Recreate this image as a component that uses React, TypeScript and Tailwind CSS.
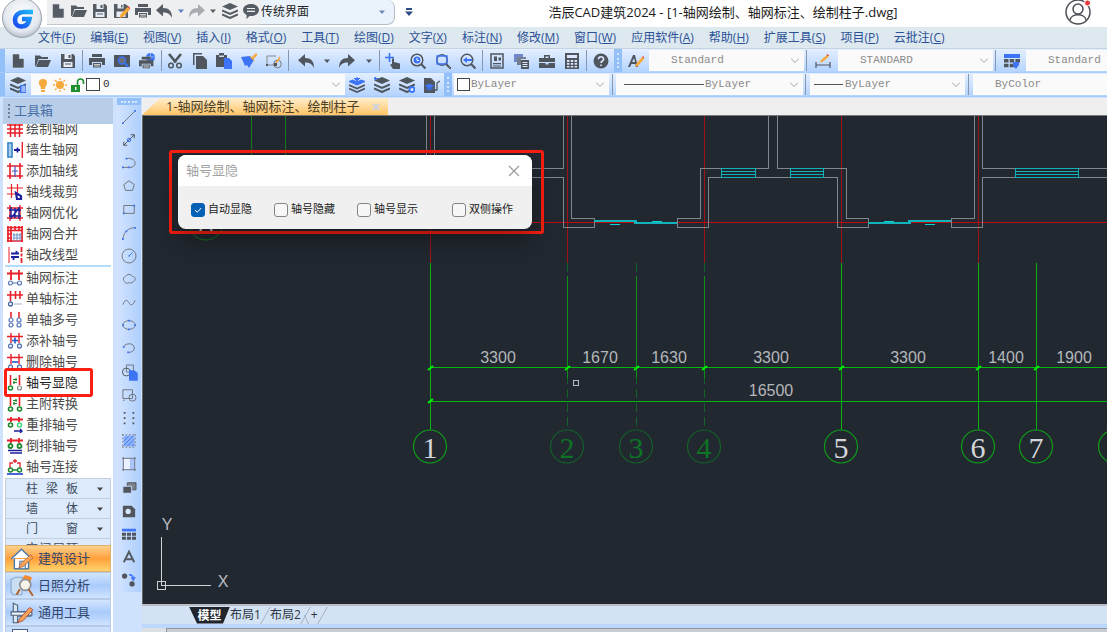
import { useState } from 'react';
import type { ReactNode } from 'react';

const BLUE = '#3d74f5';
const ORANGE = '#f5a83c';

function Svg({ children, className = 'h-4 w-4', box = 16 }: { children: ReactNode; className?: string; box?: number }) {
    return (
        <svg viewBox={`0 0 ${box} ${box}`} className={`shrink-0 ${className}`} fill="currentColor" stroke="none" aria-hidden="true">
            {children}
        </svg>
    );
}

/* ---------- solid toolbar icons ---------- */

const layerStack = (
    <>
        <path d="M8 0 16 3.500 8 7 0 3.500Z" />
        <path d="M0 7.500l8 3.500 8-3.500M0 11.500 8 15l8-3.500" fill="none" stroke="currentColor" strokeWidth="2" />
    </>
);

const printer = (
    <>
        <path d="M3 1h10v3H3zM0 5h16v7h-3V9H3v3H0z" />
        <path d="M4 10h8v4.500H4z" />
        <path d="M5 11.500h6M5 13h6" stroke="#fff" strokeWidth=".7" />
    </>
);

const icons: Record<string, ReactNode> = {
    file: <path d="M2.500 1H9.500L14 5.500V15H2.500zM9.500 1v4.500H14" stroke="#dfe6f0" strokeWidth=".6" />,
    open: <path d="M0 2.500h5L6.500 4H13v2H3.500L1.500 12 0 13.500zM4 7h12l-3 7H1z" />,
    save: (
        <>
            <path d="M1 1h12l2 2v12H1z" />
            <path d="M4.500 1h7v5h-7zM3.500 9h9v5h-9z" fill="#e9eef6" />
            <path d="M8.500 2h2v3h-2zM5 10.500h6v1H5z" />
        </>
    ),
    saveAs: (
        <>
            <path d="M0 1h11l3 2v12H0z" />
            <path d="M3.500 1h6v4.500h-6zM2.500 8.500h9V14h-9z" fill="#e9eef6" />
            <path d="M7 2h1.500v2.500H7z" />
            <path d="M5.500 15l1-3.500 7-7.500 2.500 2.500-7 7.500z" fill={ORANGE} />
            <path d="M13.500 4l1-1L17 5.500l-1 1z" fill="#e04b3a" />
        </>
    ),
    print: printer,
    undo: <path d="M7 1v4c6 0 9 3 9 10-2-4-4-5.500-9-5.500V13.500L0 7.200z" />,
    redo: <path d="M9 1v4c-6 0-9 3-9 10 2-4 4-5.500 9-5.500V13.500L16 7.200z" />,
    layers: layerStack,
    chat: (
        <>
            <path d="M8 1c4.500 0 8 2.600 8 6s-3.500 6-8 6l-1.500-.1L3.500 16l.1-4.100C1.400 10.800 0 9 0 7c0-3.400 3.500-6 8-6Z" />
            <path d="M4 5.500h8M4 8.300h8" stroke="#eee" strokeWidth="1.200" />
        </>
    ),
    preview: (
        <>
            <path d="M0 2h16v12H0z" />
            <circle cx="8" cy="7.500" r="3.500" fill="#6b7079" stroke={BLUE} strokeWidth="1.500" />
            <path d="M10.500 10l4 4" stroke={BLUE} strokeWidth="2" />
        </>
    ),
    publish: (
        <>
            <circle cx="11.500" cy="4.500" r="4.500" fill={BLUE} />
            <path d="M7.500 4h8M11.500 0v6" stroke="#a9c4ff" strokeWidth=".8" />
            <g transform="translate(0 3) scale(.9 .85)">{printer}</g>
        </>
    ),
    cut: (
        <>
            <path d="M2 1l7 8.500M14 1 7 9.500" stroke="currentColor" strokeWidth="2.600" />
            <circle cx="4" cy="12.500" r="2.300" fill="none" stroke="currentColor" strokeWidth="1.500" />
            <circle cx="12" cy="12.500" r="2.300" fill="none" stroke="currentColor" strokeWidth="1.500" />
        </>
    ),
    copy: <path d="M1 0h9v1.500H2.500V12H1zM4 3h7l4 4v9H4z" />,
    paste: (
        <>
            <path d="M0 2h3V0h5v2h3v12H0z" />
            <path d="M3 2.500h5v1.500H3z" fill="#cfdcf0" />
            <path d="M8 5h5l4 4v7H8z" fill={BLUE} />
        </>
    ),
    brush: (
        <>
            <path d="M0 4l9-1 4 4-5 8-2-3-2 1z" fill={BLUE} />
            <path d="M8 3l3 1 4-4 1.500 2-4 4L14 9" fill={ORANGE} />
        </>
    ),
    shape: (
        <>
            <path d="M1 12V3h9M1 12h7" fill="none" stroke="#888" strokeWidth="1" />
            <circle cx="11.500" cy="11" r="3.800" fill="none" stroke="#777" />
            <path d="M9 12l5-8" stroke={ORANGE} strokeWidth="1.500" />
            <path d="M0 11h2v2H0zM8 10h3v3H8z" />
        </>
    ),
    pan: (
        <>
            <path d="M4.500 0v9M0 4.500h9" stroke={BLUE} strokeWidth="1.600" />
            <path d="M7 5.500h2V9l6 1.500V16H8l-3-4.500 2-.5z" />
        </>
    ),
    zoomTime: (
        <>
            <circle cx="7" cy="7" r="5.800" fill="#dbe8ff" stroke="currentColor" strokeWidth="1.500" />
            <circle cx="7" cy="7" r="3.500" fill={BLUE} />
            <path d="M7 5v2.500h2" fill="none" stroke="#fff" />
            <path d="M11 11l4.500 4.500" stroke="currentColor" strokeWidth="2.200" />
        </>
    ),
    zoomWindow: (
        <>
            <circle cx="7" cy="7" r="5.300" fill="none" stroke="currentColor" strokeWidth="1.500" />
            <path d="M2 3h10v8H2z" fill="none" stroke={BLUE} strokeWidth="1.300" />
            <path d="M11 11l3.500 3.500M14 16h2v-2" stroke="currentColor" strokeWidth="2" />
        </>
    ),
    zoomBack: (
        <>
            <circle cx="7" cy="7" r="5.800" fill="none" stroke="currentColor" strokeWidth="1.400" />
            <path d="M3 7l4-3v2h5v2H7v2z" fill={BLUE} />
            <path d="M11 11l4.500 4.500" stroke="currentColor" strokeWidth="2.200" />
        </>
    ),
    props: (
        <>
            <path d="M2 1h12v14H2z" fill="none" stroke="currentColor" strokeWidth="1.500" />
            <path d="M5 3.500h3V8H5zM9.500 4.500H12v3H9.500zM4 10h8v1.200H4zM4 12.500h8v1H4z" />
        </>
    ),
    design: (
        <>
            <path d="M0 1h9v3H3v5H0z" fill="#6e87c9" />
            <path d="M3 4h9v2H7v6H3z" opacity=".7" />
            <path d="M7 7h8v9H7z" />
            <path d="M8.500 9.500h5M8.500 11.500h5M8.500 13.500h5" stroke="#dbe8ff" />
        </>
    ),
    toolbox: (
        <>
            <path d="M5 2h6v3h5v4H0V5h5zM6.500 3.500V5h3V3.500z" fillRule="evenodd" />
            <path d="M0 10h6.500v1.500h3V10H16v5H0z" />
        </>
    ),
    calc: (
        <>
            <path d="M1 0h14v16H1z" />
            <path d="M3 2h10v3H3zM3 7h2.400v2H3zM6.800 7h2.400v2H6.800zM10.600 7H13v2h-2.400zM3 10h2.400v1.800H3zM6.800 10h2.400v1.800H6.800zM10.600 10H13v1.800h-2.400zM3 13h2.400v1.500H3zM6.800 13h2.400v1.500H6.800zM10.600 13H13v1.500h-2.400z" fill="#dbe8ff" />
        </>
    ),
    help: (
        <>
            <circle cx="8" cy="8" r="7.500" />
            <path d="M5.500 6.300C5.500 3 10.600 3 10.600 6.200 10.600 8 8 8 8 10M8 11.500v1.600" fill="none" stroke="#dbe8ff" strokeWidth="1.600" />
        </>
    ),
    textStyle: (
        <>
            <path d="M0 14 5 2h2l3 12H8L7.300 11H3.500L2 14zM4.200 9H7L6 5z" fillRule="evenodd" />
            <path d="M7 14l1-3 6-7 2 2-6 7z" fill={ORANGE} />
            <path d="M14 4l1-1 1.500 1.500L16 6z" fill="#e04b3a" />
        </>
    ),
    dimStyle: (
        <>
            <path d="M1 9v6M15 9v6M1 12h14" stroke="currentColor" strokeWidth="1.200" fill="none" />
            <path d="M5 9.500l1-2.500 6-5 1.500 2-6 5z" fill={ORANGE} />
            <path d="M11.500 2l1.200-1L14 2.500l-1 1z" fill="#e04b3a" />
        </>
    ),
    tableStyle: (
        <>
            <path d="M0 1h16v4H0z" fill={BLUE} />
            <path d="M0 6h4.500v3.500H0zM5.700 6h4.500v3.500H5.700zM11.400 6H16v3.500h-4.600zM0 10.700h4.500v3.500H0zM5.700 10.700h4.500v3.500H5.700z" />
            <path d="M9 9h6v3l-3 4-3-3z" fill={BLUE} />
        </>
    ),
    layerManager: (
        <>
            {layerStack}
            <path d="M10 8h7v8h-7z" fill={BLUE} />
            <path d="M11.500 10h4M11.500 12h4M11.500 14h4" stroke="#fff" />
        </>
    ),
    layerTop: (
        <>
            <path d="M8 0v5M5 1l3 3 3-3M0 4.500l8 3.500 8-3.500-4-1.500-4 2-4-2z" fill={BLUE} stroke={BLUE} />
            <path d="M0 8l8 3.500L16 8M0 11.500 8 15l8-3.500" fill="none" stroke="currentColor" strokeWidth="1.700" />
        </>
    ),
    layerPrev: (
        <>
            {layerStack}
            <path d="M0 1.500h5M0 1.500 2 0M0 1.500 2 3" stroke={BLUE} strokeWidth="1.200" />
        </>
    ),
    layerState: (
        <>
            {layerStack}
            <circle cx="13" cy="12.500" r="2.500" fill="#dbe8ff" stroke={BLUE} strokeWidth="1.800" />
        </>
    ),
    layerFile: (
        <>
            <path d="M0 1h7l4 4v11H0z" />
            <path d="M5.500 6.500l5 2.500-5 2.500-5-2.500zM1 11.500l4.500 2 4.500-2" fill={BLUE} />
            <path d="M9 13h4V6l3-2" fill="none" stroke="currentColor" strokeWidth="1.300" />
        </>
    ),
};

/* ---------- toolbox list icons ---------- */

const RED = '#e8202a';
const NAVY = '#1c1f9c';
const GREEN = '#1c8a2c';

type Stroke = [d: string, color: string, width?: number];

const posts = 'M4 0v10M12 0v10M0 3.500h16';
const bubbles = 'M1.500 13a2 2 0 1 0 4 0a2 2 0 1 0-4 0M10.500 13a2 2 0 1 0 4 0a2 2 0 1 0-4 0';

const grid: { name: string; strokes: Stroke[] }[] = [
    { name: '绘制轴网', strokes: [['M3.500 0v16M8 0v16M12.500 0v16M0 4h16M0 8h16M0 12h16', RED, 1.5]] },
    { name: '墙生轴网', strokes: [['M1 1h4v14H1z', '#2b7cc4', 1.6], ['M3 2v12', '#a5cdf0', 2], ['M7 8h6M10.500 5.500v5', NAVY, 1.8], ['M15.500 0v16', RED, 1.8]] },
    { name: '添加轴线', strokes: [['M3 0v16M13 0v16M0 3h16M0 13h16', RED, 1.6], ['M8 3v11M5 8h6', '#4450c0', 1.2]] },
    { name: '轴线裁剪', strokes: [['M4.500 0v14M10.500 0v9M0 4h16M0 10h9', RED, 1.2], ['M9 9l5 3v3h-4z', NAVY, 2.2]] },
    { name: '轴网优化', strokes: [['M3 0v16M13 0v16M0 3h16M0 13h16', RED, 1.4], ['M4 2v12M8 3v10M12 2v12M2 5h12M2 11h12M5 12l7-9', NAVY, 1.4]] },
    { name: '轴网合并', strokes: [['M0 1.500h16M1 0v16M4 0v16M0 4.500h16M8 0v5M0 8h5M0 12h5M12 0v5M15 0v16M0 15h16', RED, 1.7], ['M7 7v8M10 7v8M13 7v8M6 9h9M6 12h9', '#6c8fc0', 1]] },
    { name: '轴改线型', strokes: [['M2 0v16', RED, 1], ['M14.500 0v5M14.500 6.500v3M14.500 11v5', RED, 1.8], ['M4 6.500h8M4 10h8M9.500 4v3M6.500 10v3', NAVY, 1.8]] },
];

const marks: { name: string; strokes: Stroke[] }[] = [
    { name: '轴网标注', strokes: [[posts, RED, 1.8], [bubbles, '#5577b8', 1.2], ['M5 13h6', '#5577b8', 1]] },
    { name: '单轴标注', strokes: [['M3.500 0v10M8.500 0v8M13 0v8M0 4h16', RED, 1.6], ['M1.500 13a2 2 0 1 0 4 0a2 2 0 1 0-4 0', '#4466a8', 1.3], ['M7 13h8', '#8899bb', .8]] },
    { name: '单轴多号', strokes: [['M4 0v6M12 0v6', RED, 1.6], ['M2 8a2 2 0 1 0 4 0a2 2 0 1 0-4 0M10 8a2 2 0 1 0 4 0a2 2 0 1 0-4 0', '#5577b8', 1.2], ['M2 13a2 2 0 1 0 4 0a2 2 0 1 0-4 0M10 13a2 2 0 1 0 4 0a2 2 0 1 0-4 0', '#5577b8', 1.2]] },
    { name: '添补轴号', strokes: [[posts, RED, 1.4], [bubbles, '#5577b8', 1.3], ['M5 7.500h6M8 4.500v6', '#2358d0', 1.6]] },
    { name: '删除轴号', strokes: [[posts, RED, 1.4], [bubbles, '#5577b8', 1.3], ['M5 8h6', '#2358d0', 1.6]] },
    { name: '轴号显隐', strokes: [['M3.500 0v10M12.500 0v10', RED, 1.6], ['M1.500 13a2 2 0 1 0 4 0a2 2 0 1 0-4 0', GREEN, 1.5], ['M10.500 13a2 2 0 1 0 4 0a2 2 0 1 0-4 0', '#8a8a8a', 1.2], ['M6 4.500h4M6 7.500h4M9 3v3M7 6v3', GREEN, 1.2]] },
    { name: '主附转换', strokes: [['M3.500 0v10M12.500 0v10', RED, 1.6], [bubbles, GREEN, 1.6], ['M6 4.500h4M6 7.500h4M9 3v3M7 6v3', GREEN, 1.2]] },
    { name: '重排轴号', strokes: [['M4 0v5M12 0v5M0 2.500h16', RED, 1.8], ['M1.500 8a2 2 0 1 0 4 0a2 2 0 1 0-4 0', GREEN, 1.6], ['M10.500 8a2 2 0 1 0 4 0a2 2 0 1 0-4 0', '#3fd87a', 1.6], ['M7 14h8M13 12l2 2-2 2', NAVY, 1.4]] },
    { name: '倒排轴号', strokes: [['M4 0v5M12 0v5M0 2.500h16', RED, 1.8], ['M1.500 8a2 2 0 1 0 4 0a2 2 0 1 0-4 0M10.500 8a2 2 0 1 0 4 0a2 2 0 1 0-4 0', GREEN, 1.8], ['M1 12.500h14M3 15h12', NAVY, 1.5]] },
    { name: '轴号连接', strokes: [['M3 9V4h3M13 9V4h-3M8 0v4M6 2h4', RED, 1.3], ['M1.500 11a2 2 0 1 0 4 0a2 2 0 1 0-4 0M10.500 11a2 2 0 1 0 4 0a2 2 0 1 0-4 0M6 11h4', GREEN, 1.5], ['M0 15h16', '#1d3fd0', 1.6]] },
];

function ToolRow({ name, strokes, active }: { name: string; strokes: Stroke[]; active?: boolean }) {
    return (
        <div className="relative">
            <button className={`flex h-[21px] w-full items-center gap-[3px] pl-[2px] text-[13px] leading-[21px] ${active ? 'text-[#222]' : 'text-[#4b4b4b]'}`}>
                <Svg>
                    {strokes.map(([d, color, width], i) => (
                        <path key={i} d={d} fill="none" stroke={color} strokeWidth={width ?? 1} />
                    ))}
                </Svg>
                {name}
            </button>
            {active && <div className="pointer-events-none absolute -top-1 -bottom-1 -left-px z-10 w-[89px] rounded-[3px] border-[3px] border-[#fb1e12]" />}
        </div>
    );
}

/* ---------- draw toolbar icons ---------- */

const drawIcons: { label: string; art: ReactNode }[] = [
    { label: '直线', art: <><path d="M1 15 15 1" /><path d="M0 14h2v2H0zM14 0h2v2h-2z" fill={BLUE} stroke="none" /></> },
    { label: '构造线', art: <><path d="M2 14 14 2M2 10v4h4M10 2h4v4" stroke="#50555c" /><circle cx="8" cy="8" r="2" stroke={BLUE} /></> },
    { label: '多段线', art: <><path d="M5 3c12-2 13 10 4 10H1" /><path d="M0 12h2v2H0zM7 12h2v2H7zM4 2h2v2H4z" fill={BLUE} stroke="none" /></> },
    { label: '正多边形', art: <path d="M8 2l6 4.500L12 13H4L2 6.500z" /> },
    { label: '矩形', art: <><path d="M2 4h12v9H2z" /><path d="M1 12h2v2H1zM13 3h2v2h-2z" fill={BLUE} stroke="none" /></> },
    { label: '圆弧', art: <><path d="M1 15C2 7 7 2 15 2" /><path d="M0 14h2v2H0zM14 1h2v2h-2zM4 5h2v2H4z" fill={BLUE} stroke="none" /></> },
    { label: '圆', art: <><circle cx="8" cy="8" r="8" /><path d="M8 8l4-4M7 8h2" stroke={BLUE} /></> },
    { label: '云线', art: <path d="M4 5c2-3 6-3 8 0 4 0 4 5 1 6-2 2-4 2-5 1-3 2-5 0-5-1C1 10 1 6 4 5Z" /> },
    { label: '样条曲线', art: <path d="M1 11c3-8 6-4 7-2s4 5 7-3" /> },
    { label: '椭圆', art: <><ellipse cx="8" cy="8" rx="7" ry="5" /><path d="M7 2h2v2H7zM7 12h2v2H7zM0 7h2v2H0zM14 7h2v2h-2z" fill={BLUE} stroke="none" /></> },
    { label: '椭圆弧', art: <><path d="M2 6c3-4 12-4 12 2 0 4-4 5-7 5" /><path d="M1 6h2v2H1zM6 12h2v2H6z" fill={BLUE} stroke="none" /></> },
    { label: '插入块', art: <><path d="M5 0h8v8H5z" /><circle cx="5" cy="8" r="4.500" stroke="#50555c" /><path d="M8 6h6l4 3v9H8z" fill={BLUE} stroke="none" /></> },
    { label: '创建块', art: <><path d="M1 2h11v10H1z" /><circle cx="12" cy="11" r="4" /><path d="M1 14h2" /></> },
    { label: '点', art: <path d="M2 1h2v2H2zM12 1h2v2h-2zM2 7h2v2H2zM12 7h2v2h-2zM2 13h2v2H2zM12 13h2v2h-2z" fill="#50555c" stroke="none" /> },
    { label: '图案填充', art: <><path d="M2 2h12v12H2z" fill="#8db4fb" stroke="none" /><path d="M2 8l6-6M2 13 13 2M6 14l8-8M11 14l3-3" stroke={BLUE} /><path d="M1 0v16M0 15h16M15 0v16M0 1h16" strokeDasharray="2 2" /></> },
    { label: '渐变色', art: <><path d="M2 2h12v12H2z" fill="#a9c4fb" stroke="none" /><path d="M2 2h7v12H2z" fill="#e9f0ff" stroke="none" /><path d="M1.500 0v16M0 14.500h16M14.500 0v16M0 1.500h16" /></> },
    { label: '面域', art: <><path d="M6 2h10v8H6z" fill="#7d828a" stroke="#50555c" /><path d="M1 6h10v8H1z" fill="#50555c" stroke="#c5dcff" /></> },
    { label: '区域覆盖', art: <><path d="M1 2h10l4 4v9H1z" fill="#50555c" stroke="none" /><circle cx="7" cy="8.500" r="3" fill="#d6e6ff" stroke="none" /></> },
    { label: '表格', art: <><path d="M0 2h16v3H0z" fill={BLUE} stroke="none" /><path d="M0 6.500h4.500V10H0zM5.700 6.500h4.500V10H5.700zM11.400 6.500H16V10h-4.600zM0 11h4.500v3.500H0zM5.700 11h4.500v3.500H5.700zM11.400 11H16v3.500h-4.600z" fill="#50555c" stroke="none" /></> },
    { label: '多行文字', art: <path d="M2 14 8 2l6 12M4.500 10.500h7" stroke="#565c64" strokeWidth="2.200" /> },
    { label: '添加选定对象', art: <><circle cx="3" cy="3.500" r="3" fill="#50555c" stroke="none" /><circle cx="11.500" cy="12.500" r="3" fill="#50555c" stroke="none" /><path d="M8 2c4 0 5 2 5 5M10.500 5l2.500 3 2-3.500" stroke={BLUE} strokeWidth="1.500" /></> },
];

/* ---------- small toolbar parts ---------- */

function IconButton({ icon, className = 'flex-1' }: { icon: string; className?: string }) {
    return (
        <button aria-label={icon} className={`flex items-center justify-center ${className}`}>
            <Svg>{icons[icon]}</Svg>
        </button>
    );
}

function Caret({ className = 'text-[#777]' }: { className?: string }) {
    return (
        <Svg box={8} className={`h-2 w-2 ${className}`}>
            <path d="M1 2.500h6L4 6z" />
        </Svg>
    );
}

function Sep() {
    return (
        <span className="flex w-1 shrink-0 justify-center">
            <span className="my-px w-px bg-[#8797b0]" />
        </span>
    );
}

function Grip() {
    return (
        <span className="flex w-2 shrink-0 justify-center bg-[#94c0fa]">
            <span className="my-1 border-l-2 border-dotted border-[#d8e8ff]" />
        </span>
    );
}

function Group({ names, className }: { names: string[]; className: string }) {
    return (
        <div className={`flex shrink-0 ${className}`}>
            {names.map((n) => <IconButton key={n} icon={n} />)}
        </div>
    );
}

function Combo({ label, value, lead, className, textClass = 'text-[#8a8a8a]' }: { label: string; value: string; lead?: ReactNode; className: string; textClass?: string }) {
    return (
        <div className={`my-px flex shrink-0 items-center bg-[#fafafa] ${className}`}>
            {lead}
            <select aria-label={label} className={`h-full min-w-0 flex-1 appearance-none bg-transparent font-['Liberation_Mono','Noto_Sans_CJK_SC',monospace] text-[11px] outline-none ${textClass}`}>
                <option>{value}</option>
            </select>
            <svg viewBox="0 0 8 5" className="pointer-events-none mr-[5px] h-[5px] w-2 shrink-0" fill="none" stroke="#a3a3a3">
                <path d="M0 .5l4 4 4-4" />
            </svg>
        </div>
    );
}

/* ---------- top bars ---------- */

const menus: [string, string][] = [
    ['文件', 'F'], ['编辑', 'E'], ['视图', 'V'], ['插入', 'I'], ['格式', 'O'], ['工具', 'T'], ['绘图', 'D'], ['文字', 'X'],
    ['标注', 'N'], ['修改', 'M'], ['窗口', 'W'], ['应用软件', 'A'], ['帮助', 'H'], ['扩展工具', 'S'], ['项目', 'P'], ['云批注', 'C'],
];

function TitleBar() {
    return (
        <header className="flex h-[27px] shrink-0 items-start bg-white pl-[47px]">
            <div className="flex h-[25px] shrink-0 items-center border-b border-[#c3c8ce] bg-[#edeff1] pb-[2px] text-[#565c64]">
                <Group names={['file', 'open', 'save', 'saveAs', 'print', 'undo']} className="h-full w-[128px]" />
                <Caret className="mx-[2px] text-[#5b7fc0]" />
                <IconButton icon="redo" className="w-5 text-[#a9adb2]" />
                <Caret className="mx-[2px]" />
                <Group names={['layers', 'chat']} className="h-full w-[42px]" />
            </div>
            <div className="flex h-[25px] w-[134px] shrink-0 items-center rounded-r-lg border-r border-b border-[#b4bcc8] bg-[#eaf3fc] pr-2">
                <select aria-label="工作空间" className="h-full min-w-0 flex-1 appearance-none bg-transparent text-[12px] text-[#222] outline-none">
                    <option>传统界面</option>
                </select>
                <Caret className="text-[#6d87b5]" />
            </div>
            <button aria-label="自定义快速访问" className="ml-2 flex h-6 w-3 items-center justify-center text-[#2d4b85]">
                <Svg box={8} className="h-2 w-2"><path d="M1 0h6v2H1zM0 3.500h8L4 8z" /></Svg>
            </button>
            <h1 className="flex-1 truncate pr-[34px] text-center text-[13px] leading-[24px] text-[#1b1b1b]">浩辰CAD建筑2024 - [1-轴网绘制、轴网标注、绘制柱子.dwg]</h1>
            <button aria-label="账户" className="mr-[14px] flex">
                <svg viewBox="0 0 28 26" className="h-[26px] w-7" fill="none" stroke="#4b4f55" strokeWidth="1.500">
                    <circle cx="13" cy="12" r="12" />
                    <circle cx="13" cy="9" r="5" />
                    <path d="M5 20c1-7 15-7 16 0" />
                    <circle cx="22.500" cy="3" r="3" fill="#e8393c" stroke="#fff" strokeWidth="1" />
                </svg>
            </button>
        </header>
    );
}

function Logo() {
    return (
        <div className="absolute top-0 left-0 z-20 h-[39px] w-[43px]">
            <svg viewBox="0 0 43 39" className="h-full w-full">
                <defs>
                    <radialGradient id="orb" cx=".5" cy=".4" r=".6">
                        <stop offset="0" stopColor="#fff" />
                        <stop offset=".75" stopColor="#e3e8ef" />
                        <stop offset="1" stopColor="#b4bcc8" />
                    </radialGradient>
                    <linearGradient id="gee" x1="0" x2="1" y1="1" y2="0">
                        <stop offset="0" stopColor="#1a48f0" />
                        <stop offset="1" stopColor="#1fb4f7" />
                    </linearGradient>
                </defs>
                <circle cx="22" cy="18" r="19.500" fill="url(#orb)" stroke="#9aa2ae" />
                <path d="M33 12H23.500c-5 0-8.500 3.500-8.500 8 0 4 3 6.500 6.500 6.500 4.500 0 7-2.500 8-7.500H22" fill="none" stroke="url(#gee)" strokeWidth="4.600" />
            </svg>
        </div>
    );
}

function MenuBar() {
    return (
        <nav className="flex h-[22px] shrink-0 items-center gap-[15px] border-b border-[#c5d3e0] bg-[#dde8ef] pl-[38px] text-[12px] whitespace-nowrap text-[#2c5197]">
            {menus.map(([label, key]) => (
                <button key={key} className="shrink-0">{label}(<u>{key}</u>)</button>
            ))}
        </nav>
    );
}

const barStyle = 'flex h-6 shrink-0 overflow-hidden border-b border-[#a9cbfb] bg-linear-to-b from-[#e4efff] to-[#b3d3ff] text-[#50565e]';

function Toolbars() {
    return (
        <>
            <div className={barStyle}>
                <span className="w-[5px] shrink-0 bg-[#94c0fa]" />
                <Group names={['file', 'open', 'save']} className="w-[75px]" />
                <Sep />
                <Group names={['print', 'preview', 'publish']} className="w-[75px]" />
                <Sep />
                <Group names={['cut', 'copy', 'paste', 'brush', 'shape']} className="w-[123px]" />
                <Sep />
                <div className="flex w-[87px] shrink-0 items-center">
                    <IconButton icon="undo" className="w-8" />
                    <Caret className="mx-[2px]" />
                    <IconButton icon="redo" className="w-7" />
                    <Caret className="mx-1" />
                </div>
                <Sep />
                <Group names={['pan', 'zoomTime', 'zoomWindow', 'zoomBack']} className="w-[99px]" />
                <Sep />
                <Group names={['props', 'design', 'toolbox', 'calc']} className="w-[100px]" />
                <Sep />
                <IconButton icon="help" className="w-[26px] shrink-0" />
                <Grip />
                <IconButton icon="textStyle" className="w-[27px] shrink-0" />
                <Combo label="文字样式" value="Standard" className="w-[155px] pl-[22px]" />
                <Sep />
                <IconButton icon="dimStyle" className="w-[30px] shrink-0" />
                <Combo label="标注样式" value="STANDARD" className="w-[155px] pl-[22px]" />
                <Sep />
                <IconButton icon="tableStyle" className="w-[29px] shrink-0" />
                <Combo label="表格样式" value="Standard" className="w-[155px] pl-[22px]" />
            </div>
            <div className={barStyle}>
                <span className="w-[5px] shrink-0 bg-[#94c0fa]" />
                <IconButton icon="layerManager" className="w-[26px] shrink-0" />
                <Combo
                    label="图层"
                    value="0"
                    className="w-[314px] pl-1"
                    textClass="text-[#333]"
                    lead={
                        <span className="mr-[3px] flex items-center gap-px">
                            <Svg><path d="M8 2c5 0 5 5 2.200 8v2H5.800v-2C3 7 3 2 8 2ZM6 13h4v2H6z" fill={ORANGE} /></Svg>
                            <Svg>
                                <circle cx="8" cy="8" r="4" fill={ORANGE} />
                                <path d="M8 1v2M8 13v2M1 8h2M13 8h2M3 3l2 2M11.500 11.500l1.500 1.500M13 3l-1.500 1.500M4.500 11.500 3 13" stroke={ORANGE} strokeWidth="1.300" />
                            </Svg>
                            <Svg>
                                <path d="M2 8h9v7H2z" fill="#1d8f2f" />
                                <path d="M8.500 8V5c0-4 6-4 6 0v2" fill="none" stroke="#1d8f2f" strokeWidth="1.600" />
                                <path d="M6 10h1.500v3H6z" fill="#fff" />
                            </Svg>
                            <span className="h-[13px] w-[14px] border border-[#444] bg-white" />
                        </span>
                    }
                />
                <Group names={['layerTop', 'layerPrev', 'layerState', 'layerFile']} className="w-[99px]" />
                <Grip />
                <Combo label="颜色" value="ByLayer" className="ml-[2px] w-[155px] pl-[3px]" lead={<span className="mr-px h-[13px] w-[13px] border border-[#444] bg-white" />} />
                <span className="w-px shrink-0" />
                <Sep />
                <Combo label="线型" value="ByLayer" className="ml-[2px] w-[187px] pl-2" lead={<span className="mr-px h-px w-[80px] bg-[#555]" />} />
                <Sep />
                <Combo label="线宽" value="ByLayer" className="ml-[3px] w-[155px] pl-1" lead={<span className="mr-[2px] h-px w-[29px] bg-[#555]" />} />
                <span className="w-px shrink-0" />
                <Sep />
                <Combo label="打印样式" value="ByColor" className="ml-[3px] w-[155px] pl-[22px]" />
            </div>
        </>
    );
}

/* ---------- left side ---------- */

function Toolbox() {
    return (
        <aside className="ml-[3px] flex w-[110px] shrink-0 flex-col overflow-hidden bg-white">
            <h2 className="flex h-[26px] shrink-0 items-center gap-1 bg-[#b8cee8] pl-[5px] text-[13px] text-[#4a6ea8]">
                <span className="h-[14px] border-l-2 border-dotted border-[#6e7f99]" />
                工具箱
            </h2>
            <div className="flex h-[354px] shrink-0 flex-col justify-end overflow-hidden px-[2px] pb-px">
                {grid.map((t) => <ToolRow key={t.name} {...t} />)}
                <hr className="h-[2px] shrink-0 border-0 bg-[#b5dcf8]" />
                {marks.map((t) => <ToolRow key={t.name} {...t} active={t.name === '轴号显隐'} />)}
            </div>
            <div className="h-[67px] shrink-0 overflow-hidden px-[2px]">
                {[['柱', '梁', '板'], ['墙', '体'], ['门', '窗'], ['空', '间', '屋', '顶']].map((chars) => (
                    <button key={chars[0]} className="flex h-5 w-full items-center border border-b-0 border-[#c3cfdd] bg-[#dceafb] pr-[6px] pl-5 text-[12px] text-[#3f4a5c]">
                        <span className="flex w-[52px] justify-between">
                            {chars.map((c) => <span key={c}>{c}</span>)}
                        </span>
                        <Caret className="ml-auto text-[#444]" />
                    </button>
                ))}
            </div>
            <div className="shrink-0 px-[2px] text-[13px] text-[#35466b]">
                <button className="flex h-[27px] w-full items-center gap-1 border border-[#e0b070] bg-linear-to-b from-[#ffd08a] via-[#ffa03a] to-[#ffd36c] pl-1">
                    <Svg box={22} className="h-6 w-6">
                        <path d="M4 10v10h13V10M1 11l9.500-9L20 11" fill="#fff" stroke="#4b78a8" strokeWidth="1.300" />
                        <path d="M9 13h5v7H9z" fill="#dfeefc" stroke="#4b78a8" />
                        <path d="M8 19l2-4 9-8 2 3-9 8z" fill="#f7a35a" stroke="#a35a2a" strokeWidth=".6" />
                    </Svg>
                    建筑设计
                </button>
                <button className="flex h-[27px] w-full items-center gap-1 border border-[#b8cbe6] bg-linear-to-b from-[#d3e5ff] via-[#a9cbfb] to-[#cfe3ff] pl-1">
                    <Svg box={22} className="h-6 w-6">
                        <path d="M1 5l4-2h6v16H3l-2-2z" fill="#c9def2" stroke="#88a9cc" />
                        <path d="M11 4l3-3 6 2-1 4z" fill="#f28a2d" />
                        <circle cx="14" cy="10" r="5" fill="#f5f3ea" stroke="#8c8f96" strokeWidth="1.500" />
                        <path d="M17 14l4 6M9 14l-3 5" stroke="#b3612c" strokeWidth="1.800" />
                    </Svg>
                    日照分析
                </button>
                <button className="flex h-[27px] w-full items-center gap-1 border border-[#b8cbe6] bg-linear-to-b from-[#d3e5ff] via-[#a9cbfb] to-[#cfe3ff] pl-1">
                    <Svg box={22} className="h-6 w-6">
                        <path d="M3 2l4 2v6h12v4H7v6H3z" fill="#d9e6f2" stroke="#49617e" />
                        <path d="M1 10h19v3H1z" fill="#eef4fa" stroke="#49617e" />
                        <path d="M7 20l2-4 9-10 3 2-9 10z" fill="#f7a35a" stroke="#a33a2a" strokeWidth=".7" />
                    </Svg>
                    通用工具
                </button>
                <button aria-label="更多" className="flex h-[27px] w-full items-start border border-[#b8cbe6] bg-[#c9dffd] pl-[6px]">
                    <span className="mt-[2px] h-4 w-4 border border-[#49617e] bg-white" />
                </button>
            </div>
        </aside>
    );
}

function DrawBar() {
    return (
        <div className="mr-px ml-1 w-6 shrink-0">
            <div className="flex h-[494px] flex-col bg-linear-to-r from-[#d3e4ff] to-[#aecffd]">
                <span className="flex h-[7px] items-center bg-[#94c0fa] px-1">
                    <span className="flex-1 border-t-2 border-dotted border-[#d8e8ff]" />
                </span>
                {drawIcons.map((d) => (
                    <button key={d.label} aria-label={d.label} className="flex flex-1 items-center justify-center">
                        <svg viewBox="0 0 16 16" className="h-[14px] w-[14px] overflow-visible" fill="none" stroke="#70757d" strokeWidth="1.100">
                            {d.art}
                        </svg>
                    </button>
                ))}
            </div>
        </div>
    );
}

/* ---------- drawing ---------- */

// screen position of the view's corner; model items below are given in screen units
const ORIGIN = { x: 143, y: 116 };
const FAR = 4000;

const axes = [
    { x: 430, no: '1' },
    { x: 567, no: '2', hidden: true },
    { x: 636, no: '3', hidden: true, noRed: true },
    { x: 704, no: '4', hidden: true },
    { x: 841, no: '5' },
    { x: 978, no: '6' },
    { x: 1036, no: '7', noRed: true },
];

const dims: [number, number, string][] = [
    [498, 363, '3300'], [600, 363, '1670'], [669, 363, '1630'], [771, 363, '3300'],
    [908, 363, '3300'], [1006, 363, '1400'], [1074, 363, '1900'], [771, 396, '16500'],
];

const walls =
    'M426 100V200M434 100V200M500 168H563V100M571 100V218H594V227H563V177H500' +
    'M768 100V168H700V218H677V227H708V177H837V227H868V218H846V168H777V100' +
    'M974 100V218H951V227H982V177H4000M982 100V168H4000';

const windows = [[721, 755], [790, 823], [1015, 1078]];

function Drawing() {
    return (
        <svg className="block h-full w-full" fill="none" shapeRendering="crispEdges">
            <g transform={`translate(${-ORIGIN.x} ${-ORIGIN.y})`}>
                <path d="M251.500 100V200M285.500 100V200" stroke="#14781c" />
                <circle cx="206" cy="223" r="17" stroke="#14781c" shapeRendering="auto" />
                <text x="206" y="231" textAnchor="middle" fontSize="20" fill="#c9cccf" fontFamily="Liberation Sans, sans-serif">A</text>

                <path d={`M430 222.500H${FAR}`} stroke="#c00a10" />
                {axes.filter((a) => !a.noRed).map((a) => (
                    <path key={a.no} d={`M${a.x + 0.5} 100V263`} stroke="#a01218" />
                ))}
                <g transform="translate(.5 .5)">
                    <path d={walls} stroke="#82868c" />
                    {windows.map(([a, b]) => (
                        <path key={a} d={`M${a} 168H${b}V177H${a}ZM${a} 171H${b}M${a} 174H${b}`} stroke="#0eb2b8" />
                    ))}
                </g>
                <path d="M594 220h43v2h-43zM634 222h43v2h-43zM868 222h43v2h-43zM908 220h43v2h-43z" fill="#10b4ba" />
                <path d="M610 224.500h10M652 221h10M884 221h10M925 224.500h10" stroke="#10d4da" />

                {axes.map((a) => {
                    const x = a.x + 0.5;
                    return a.hidden ? (
                        <g key={a.no}>
                            <path d={`M${x} 263V430`} stroke="#12602a" strokeDasharray="9 5" />
                            <path d={`M${x} 276V378`} stroke="#109018" />
                        </g>
                    ) : (
                        <path key={a.no} d={`M${x} 263V430`} stroke="#08b010" />
                    );
                })}
                <path d={`M430 367.500H${FAR}M430 401.500H${FAR}`} stroke="#06b80c" />
                <g stroke="#00f000" strokeWidth="2" shapeRendering="auto">
                    {axes.map((a) => <path key={a.no} d={`M${a.x - 2} 370l5-4`} />)}
                    <path d="M428 403l5-4" />
                </g>
                <g shapeRendering="auto">
                    {axes.map((a) => (
                        <g key={a.no}>
                            <circle cx={a.x} cy="446.500" r="16.500" stroke={a.hidden ? '#12602a' : '#0e9c18'} strokeWidth="1.200" />
                            <text x={a.x} y="458" textAnchor="middle" fontSize="30" fontFamily="Liberation Serif, serif" fill={a.hidden ? '#0c7424' : '#d4d6d8'}>{a.no}</text>
                        </g>
                    ))}
                    <circle cx="1115" cy="446.500" r="16.500" stroke="#0e9c18" strokeWidth="1.200" />
                    {dims.map(([x, y, t]) => (
                        <text key={`${x}-${y}`} x={x} y={y} textAnchor="middle" fontSize="16" fontFamily="Liberation Sans, sans-serif" fill="#b4b7bb">{t}</text>
                    ))}
                </g>
                <path d="M573.500 380.500h5v5h-5z" stroke="#b9bcc0" />

                <path d="M157.500 581.500h8v8h-8zM161.500 537V585.500H211" stroke="#d0d2d4" />
                <text x="167" y="530" textAnchor="middle" fontSize="16" fontFamily="Liberation Sans, sans-serif" fill="#b9bcc0">Y</text>
                <text x="223" y="587" textAnchor="middle" fontSize="16" fontFamily="Liberation Sans, sans-serif" fill="#b9bcc0">X</text>
            </g>
        </svg>
    );
}

/* ---------- axis number dialog ---------- */

const options = ['自动显隐', '轴号隐藏', '轴号显示', '双侧操作'];

function AxisDialog() {
    const [checked, setChecked] = useState('自动显隐');

    return (
        <div className="absolute top-[34px] left-[26px] rounded-[3px] border-[3px] border-[#fb1e12] py-[2px] pr-[9px] pl-[6px]">
            <section role="dialog" aria-label="轴号显隐" className="w-[354px] overflow-hidden rounded-lg bg-[#f0f0f0] shadow-[0_12px_28px_rgba(0,0,0,0.35)]">
                <header className="flex h-[31px] items-center justify-between bg-white pr-3 pl-2 text-[13px] text-[#a2a2a2]">
                    轴号显隐
                    <button aria-label="关闭">
                        <svg viewBox="0 0 12 12" className="h-3 w-3" stroke="#9a9a9a" strokeWidth="1.200"><path d="M1 1l10 10M11 1 1 11" /></svg>
                    </button>
                </header>
                <div className="flex h-[43px] items-center gap-[22px] pt-1 pl-[13px]">
                    {options.map((name) => (
                        <label key={name} className="flex items-center gap-[3px] text-[11px] text-[#1c1c1c] last:ml-3">
                            <span className="relative flex">
                                <input
                                    type="checkbox"
                                    checked={checked === name}
                                    onChange={() => setChecked(name)}
                                    className="h-[14px] w-[14px] appearance-none rounded-[3px] border border-[#858585] bg-[#f7f7f7] checked:border-[#0560b6] checked:bg-[#0560b6]"
                                />
                                {checked === name && (
                                    <svg viewBox="0 0 14 14" className="pointer-events-none absolute inset-0" fill="none" stroke="#fff"><path d="M4 7l2.200 2.300L10.200 5" /></svg>
                                )}
                            </span>
                            {name}
                        </label>
                    ))}
                </div>
            </section>
        </div>
    );
}

function Slant({ back }: { back?: boolean }) {
    return <span className={`w-px shrink-0 bg-[#a3b0c8] ${back ? 'mr-1 -ml-1 h-[9px] translate-y-1 skew-x-[25deg]' : 'mx-1 h-[17px] skew-x-[-30deg]'}`} />;
}

export default function App() {
    return (
        <div className="relative flex h-screen min-w-0 flex-col overflow-hidden bg-[#cfe2fd] font-['Open_Sans','Noto_Sans_CJK_SC',sans-serif]">
            <Logo />
            <TitleBar />
            <MenuBar />
            <Toolbars />

            <div className="flex min-h-0 flex-1 pt-px">
                <Toolbox />
                <DrawBar />
                <main className="flex min-w-0 flex-1 flex-col">
                    <div className="flex h-[18px] shrink-0 items-end border-b border-[#777] bg-[#efefef]">
                        <div className="flex h-[17px] w-[246px] items-center justify-between rounded-tr-[3px] bg-linear-to-b from-[#ffeecb] to-[#ffc462] pr-2 pl-6 text-[13px] leading-[17px] whitespace-nowrap text-[#4c4026] [clip-path:polygon(18px_0,100%_0,100%_100%,0_100%)]">
                            <span>1-轴网绘制、轴网标注、绘制柱子</span>
                            <button aria-label="关闭图纸">
                                <svg viewBox="0 0 8 8" className="h-2 w-2" stroke="#c9d3de" strokeWidth="2"><path d="M1 1l6 6M7 1 1 7" /></svg>
                            </button>
                        </div>
                    </div>
                    <div className="relative min-h-0 flex-1 overflow-hidden border-l border-[#666] bg-[#222830]">
                        <Drawing />
                        <AxisDialog />
                    </div>
                    <div className="flex h-5 shrink-0 items-center border-t-2 border-[#b9bcc2] bg-[#d4e3f3] pl-[47px] text-[12px] leading-[18px] text-[#2b3444]">
                        <button className="h-[17px] w-[41px] bg-[#20252c] text-center font-bold text-white [clip-path:polygon(0_0,100%_0,34px_100%,8px_100%)]">模型</button>
                        <button>布局1</button>
                        <Slant />
                        <button>布局2</button>
                        <Slant />
                        <Slant back />
                        <button>+</button>
                        <Slant />
                    </div>
                    <div className="h-1 shrink-0 bg-[#bdd6fb]" />
                    <footer className="flex h-1 shrink-0 bg-[#dcdfe3] pl-6">
                        <span className="flex-1 border-t border-l border-[#8f959e] bg-[#c9ccd0]" />
                    </footer>
                </main>
            </div>
        </div>
    );
}
